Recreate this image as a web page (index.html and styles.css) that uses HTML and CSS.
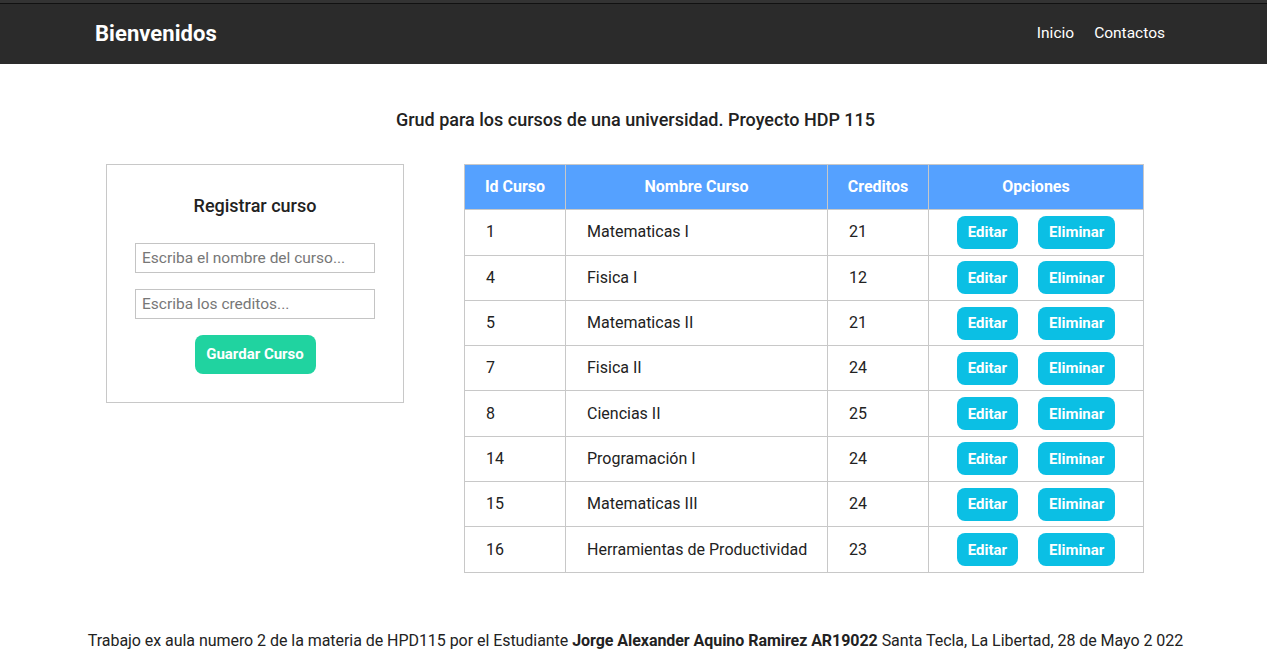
FILE: index.html
```html
<!DOCTYPE html>
<html lang="es">
<head>
<meta charset="utf-8">
<title>Cursos</title>
<link rel="stylesheet" href="styles.css">
</head>
<body>
<div class="page">
  <nav class="navbar">
    <div class="brand">Bienvenidos</div>
    <div class="links">
      <a href="#">Inicio</a>
      <a href="#">Contactos</a>
    </div>
  </nav>
  <h1 class="title">Grud para los cursos de una universidad. Proyecto HDP 115</h1>
  <main class="content">
    <section class="card">
      <h2 class="card-title">Registrar curso</h2>
      <input class="field" type="text" placeholder="Escriba el nombre del curso...">
      <input class="field" type="text" placeholder="Escriba los creditos...">
      <button class="btn btn-save">Guardar Curso</button>
    </section>
    <table class="grid">
      <thead>
        <tr><th class="c-id">Id Curso</th><th class="c-name">Nombre Curso</th><th class="c-cred">Creditos</th><th class="c-opt">Opciones</th></tr>
      </thead>
      <tbody>
        <tr><td>1</td><td>Matematicas I</td><td>21</td><td class="opts"><button class="btn btn-info">Editar</button><button class="btn btn-info">Eliminar</button></td></tr>
        <tr><td>4</td><td>Fisica I</td><td>12</td><td class="opts"><button class="btn btn-info">Editar</button><button class="btn btn-info">Eliminar</button></td></tr>
        <tr><td>5</td><td>Matematicas II</td><td>21</td><td class="opts"><button class="btn btn-info">Editar</button><button class="btn btn-info">Eliminar</button></td></tr>
        <tr><td>7</td><td>Fisica II</td><td>24</td><td class="opts"><button class="btn btn-info">Editar</button><button class="btn btn-info">Eliminar</button></td></tr>
        <tr><td>8</td><td>Ciencias II</td><td>25</td><td class="opts"><button class="btn btn-info">Editar</button><button class="btn btn-info">Eliminar</button></td></tr>
        <tr><td>14</td><td>Programación I</td><td>24</td><td class="opts"><button class="btn btn-info">Editar</button><button class="btn btn-info">Eliminar</button></td></tr>
        <tr><td>15</td><td>Matematicas III</td><td>24</td><td class="opts"><button class="btn btn-info">Editar</button><button class="btn btn-info">Eliminar</button></td></tr>
        <tr><td>16</td><td>Herramientas de Productividad</td><td>23</td><td class="opts"><button class="btn btn-info">Editar</button><button class="btn btn-info">Eliminar</button></td></tr>
      </tbody>
    </table>
  </main>
  <footer class="footer">Trabajo ex aula numero 2 de la materia de HPD115 por el Estudiante <strong>Jorge Alexander Aquino Ramirez AR19022</strong> Santa Tecla, La Libertad, 28 de Mayo 2 022</footer>
</div>
</body>
</html>
```
FILE: styles.css
```css
* { box-sizing: border-box; }
html, body { margin: 0; padding: 0; background: #fff; }
body {
  font-family: Roboto, "Liberation Sans", Arial, sans-serif;
  color: #222;
  overflow: hidden;
}
.page { width: 1267px; }
.navbar {
  height: 64px;
  background: #2b2b2b;
  box-shadow: inset 0 3px 0 #333, inset 0 4px 0 #111;
  display: flex;
  align-items: center;
  justify-content: space-between;
  padding: 2px 102px 0 95px;
}
.brand {
  color: #fff;
  font-size: 22px;
  font-weight: 700;
  letter-spacing: 0.05px;
}
.links { display: flex; gap: 20px; }
.links a {
  color: #fff;
  text-decoration: none;
  font-size: 15.5px;
}
.title {
  margin: 44px 0 0;
  padding-left: 4px;
  text-align: center;
  font-size: 18px;
  font-weight: 500;
  line-height: 24px;
  color: #222;
}
.content {
  display: flex;
  align-items: flex-start;
  margin-top: 32px;
  padding-left: 106px;
}
.card {
  width: 298px;
  height: 239px;
  border: 1px solid #c8c8c8;
  display: flex;
  flex-direction: column;
  align-items: center;
  padding-top: 30px;
}
.card-title {
  margin: 0 0 26px;
  font-size: 18px;
  font-weight: 500;
  line-height: 22px;
  color: #222;
}
.field {
  width: 240px;
  height: 30px;
  border: 1px solid #c4c4c4;
  padding: 0 6px;
  font-family: inherit;
  font-size: 15.5px;
  color: #222;
  margin-bottom: 16px;
  outline: none;
}
.field::placeholder { color: #777; }
.btn {
  border: none;
  color: #fff;
  font-family: inherit;
  font-weight: 700;
  border-radius: 8px;
  cursor: pointer;
}
.btn-save {
  background: #20d3a0;
  width: 121px;
  height: 39px;
  font-size: 15px;
  padding: 0 0 1px;
}
.grid {
  margin-left: 60px;
  border-collapse: collapse;
  table-layout: fixed;
  width: 680px;
}
.grid th, .grid td {
  border: 1px solid #c8c8c8;
  height: 45.3px;
  padding: 0 21px 1px;
  font-size: 16px;
  white-space: nowrap;
}
.grid th {
  background: #55a1ff;
  color: #fff;
  font-weight: 700;
  text-align: center;
  padding: 0 0 1px;
}
.grid td { color: #222; }
.c-id { width: 101px; }
.c-name { width: 262px; }
.c-cred { width: 101px; }
.c-opt { width: 215px; }
.grid td.opts {
  text-align: center;
  padding: 0;
}
.btn-info {
  background: #0bbfe4;
  height: 33px;
  font-size: 15px;
  padding: 0 11px;
  vertical-align: middle;
}
.btn-info + .btn-info { margin-left: 20px; }
.footer {
  margin-top: 58px;
  padding-left: 4px;
  text-align: center;
  font-size: 16px;
  line-height: 20px;
  letter-spacing: -0.05px;
  color: #222;
}
.footer strong { font-weight: 700; }
```
